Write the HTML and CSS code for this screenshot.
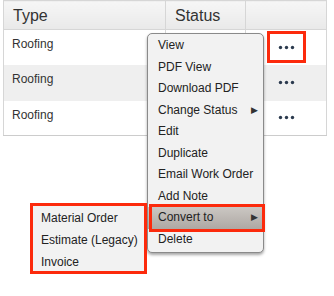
FILE: index.html
```html
<!DOCTYPE html>
<html lang="en">
<head>
    <meta charset="UTF-8">
    <link rel="stylesheet" href="styles.css">
    <title>Work Orders</title>
</head>
<body>
    <div class="page">
        <table class="orders">
            <thead>
                <tr>
                    <th class="col-type">Type</th>
                    <th class="col-status">Status</th>
                    <th class="col-actions"></th>
                </tr>
            </thead>
            <tbody>
                <tr>
                    <td>Roofing</td>
                    <td></td>
                    <td class="actions"><span class="dots dots-marked"><svg width="17" height="5" viewBox="0 0 17 5"><circle cx="2.5" cy="2.5" r="1.7"/><circle cx="8.5" cy="2.5" r="1.7"/><circle cx="14.5" cy="2.5" r="1.7"/></svg></span></td>
                </tr>
                <tr class="alt">
                    <td>Roofing</td>
                    <td></td>
                    <td class="actions"><span class="dots"><svg width="17" height="5" viewBox="0 0 17 5"><circle cx="2.5" cy="2.5" r="1.7"/><circle cx="8.5" cy="2.5" r="1.7"/><circle cx="14.5" cy="2.5" r="1.7"/></svg></span></td>
                </tr>
                <tr>
                    <td>Roofing</td>
                    <td></td>
                    <td class="actions"><span class="dots"><svg width="17" height="5" viewBox="0 0 17 5"><circle cx="2.5" cy="2.5" r="1.7"/><circle cx="8.5" cy="2.5" r="1.7"/><circle cx="14.5" cy="2.5" r="1.7"/></svg></span></td>
                </tr>
            </tbody>
        </table>

        <!-- Row action menu -->
        <ul class="menu">
            <li>View</li>
            <li>PDF View</li>
            <li>Download PDF</li>
            <li class="has-sub">Change Status <span class="arrow">&#9654;</span></li>
            <li>Edit</li>
            <li>Duplicate</li>
            <li>Email Work Order</li>
            <li>Add Note</li>
            <li class="has-sub active">Convert to <span class="arrow">&#9654;</span></li>
            <li>Delete</li>
        </ul>

        <!-- Convert to submenu -->
        <ul class="submenu">
            <li>Material Order</li>
            <li>Estimate (Legacy)</li>
            <li>Invoice</li>
        </ul>
    </div>
</body>
</html>
```

FILE: styles.css
```css
body {
    margin: 0;
    background: #fff;
    font-family: 'Liberation Sans', Arial, sans-serif;
    color: #333;
}
.page {
    position: relative;
    width: 334px;
    height: 296px;
    padding-left: 3px;
    box-sizing: border-box;
}
.orders {
    border-collapse: collapse;
    width: 324px;
    table-layout: fixed;
}
.orders th {
    height: 29px;
    padding: 1px 0 0 9px;
    box-sizing: border-box;
    text-align: left;
    font-weight: normal;
    font-size: 16px;
    color: #333;
    background: linear-gradient(#f6f6f6, #e9e9e9);
    border: 1px solid #d6d6d6;
}
.col-type { width: 162px; }
.col-status { width: 80px; }
.orders td {
    height: 35px;
    padding: 7px 0 0 8px;
    box-sizing: border-box;
    vertical-align: top;
    font-size: 12px;
    border-left: 1px solid #d6d6d6;
    border-right: 1px solid #d6d6d6;
}
.orders tbody tr:last-child td {
    border-bottom: 1px solid #ccc;
}
.orders tr.alt td {
    background: #efefef;
    height: 36px;
}
.orders td.actions {
    padding: 0;
    vertical-align: middle;
    text-align: center;
}
.dots {
    display: inline-flex;
    align-items: center;
    justify-content: center;
    width: 39px;
    height: 32px;
    box-sizing: border-box;
    vertical-align: middle;
}
.dots svg {
    fill: #2b3a4e;
}
.dots-marked {
    border: 3px solid #fc2a0c;
}
.menu, .submenu {
    list-style: none;
    margin: 0;
    padding: 0;
    font-size: 12px;
    color: #222;
}
.menu {
    position: absolute;
    left: 147px;
    top: 33px;
    width: 117px;
    padding: 1px 0 2px;
    box-sizing: border-box;
    background: #f2f2f2;
    border: 1px solid #8a8a8a;
    border-radius: 5px;
    box-shadow: 0 2px 3px rgba(0, 0, 0, 0.35);
}
.menu li {
    position: relative;
    height: 21.5px;
    line-height: 21.5px;
    padding-left: 10px;
}
.menu .arrow {
    position: absolute;
    right: 5px;
    top: 0;
    font-size: 9px;
    color: #333;
}
.menu li.active {
    background: linear-gradient(#cbc7c3, #aea8a3);
}
.menu li.active::after {
    content: '';
    position: absolute;
    left: 1px;
    right: -2px;
    top: -3px;
    bottom: -3px;
    border: 3px solid #fc2a0c;
}
.submenu {
    position: absolute;
    left: 30px;
    top: 203px;
    width: 117px;
    height: 71px;
    padding-top: 1px;
    box-sizing: border-box;
    background: #f2f2f2;
    border: 3px solid #fc2a0c;
}
.submenu li {
    line-height: 22px;
    padding-left: 8px;
}
```
